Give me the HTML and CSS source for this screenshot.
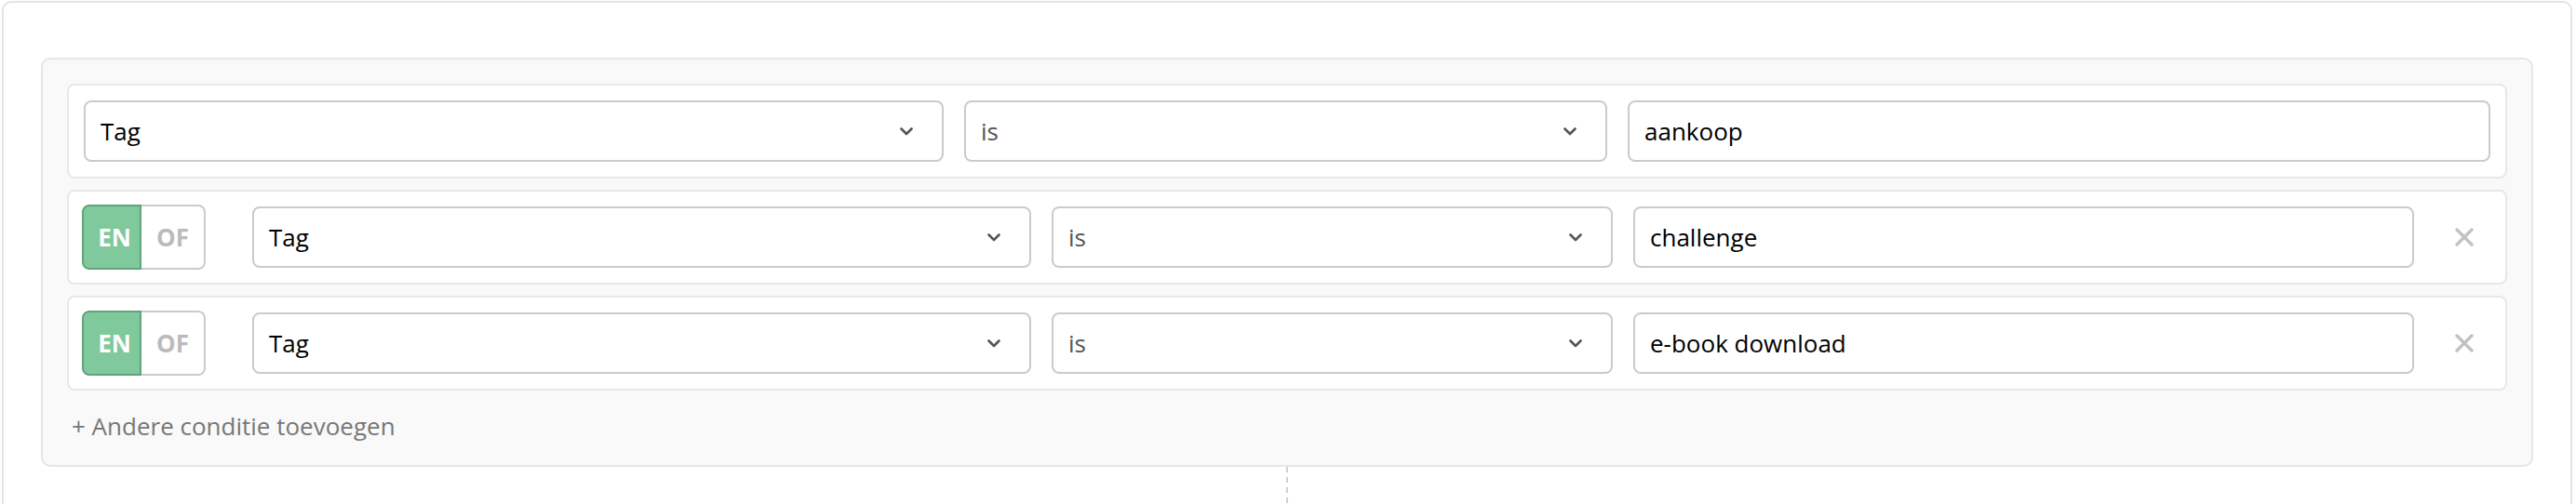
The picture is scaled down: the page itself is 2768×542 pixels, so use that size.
FILE: index.html
```html
<!DOCTYPE html>
<html lang="nl">
<head>
<meta charset="utf-8">
<title>Condities</title>
<link rel="stylesheet" href="styles.css">
</head>
<body>
<div class="card">
  <div class="panel">
    <div class="row row--first">
      <div class="select"><span class="val">Tag</span><svg class="chev" viewBox="0 0 14 9" width="14" height="9"><path d="M1.5 1.5 L7 7 L12.5 1.5" fill="none" stroke="#555" stroke-width="2.6" stroke-linecap="round" stroke-linejoin="round"/></svg></div>
      <div class="select"><span class="val val--muted">is</span><svg class="chev" viewBox="0 0 14 9" width="14" height="9"><path d="M1.5 1.5 L7 7 L12.5 1.5" fill="none" stroke="#555" stroke-width="2.6" stroke-linecap="round" stroke-linejoin="round"/></svg></div>
      <div class="input">aankoop</div>
    </div>
    <div class="row row--cond">
      <div class="toggle"><span class="toggle__opt toggle__opt--on">EN</span><span class="toggle__opt toggle__opt--off">OF</span></div>
      <div class="select"><span class="val">Tag</span><svg class="chev" viewBox="0 0 14 9" width="14" height="9"><path d="M1.5 1.5 L7 7 L12.5 1.5" fill="none" stroke="#555" stroke-width="2.6" stroke-linecap="round" stroke-linejoin="round"/></svg></div>
      <div class="select"><span class="val val--muted">is</span><svg class="chev" viewBox="0 0 14 9" width="14" height="9"><path d="M1.5 1.5 L7 7 L12.5 1.5" fill="none" stroke="#555" stroke-width="2.6" stroke-linecap="round" stroke-linejoin="round"/></svg></div>
      <div class="input">challenge</div>
      <div class="remove"><svg viewBox="0 0 20 20" width="20" height="20"><path d="M2 2 L18 18 M18 2 L2 18" stroke="#c2c2c2" stroke-width="3.4" stroke-linecap="round"/></svg></div>
    </div>
    <div class="row row--cond">
      <div class="toggle"><span class="toggle__opt toggle__opt--on">EN</span><span class="toggle__opt toggle__opt--off">OF</span></div>
      <div class="select"><span class="val">Tag</span><svg class="chev" viewBox="0 0 14 9" width="14" height="9"><path d="M1.5 1.5 L7 7 L12.5 1.5" fill="none" stroke="#555" stroke-width="2.6" stroke-linecap="round" stroke-linejoin="round"/></svg></div>
      <div class="select"><span class="val val--muted">is</span><svg class="chev" viewBox="0 0 14 9" width="14" height="9"><path d="M1.5 1.5 L7 7 L12.5 1.5" fill="none" stroke="#555" stroke-width="2.6" stroke-linecap="round" stroke-linejoin="round"/></svg></div>
      <div class="input">e-book download</div>
      <div class="remove"><svg viewBox="0 0 20 20" width="20" height="20"><path d="M2 2 L18 18 M18 2 L2 18" stroke="#c2c2c2" stroke-width="3.4" stroke-linecap="round"/></svg></div>
    </div>
    <div class="add">+ Andere conditie toevoegen</div>
  </div>
  <div class="connector"></div>
</div>
</body>
</html>
```
FILE: styles.css
```css
* { box-sizing: border-box; }

body {
  margin: 0;
  background: #fff;
  font-family: "Open Sans", "Noto Sans", sans-serif;
  font-size: 26px;
  color: #111;
}

.card {
  margin: 1px 4px 0 2px;
  border: 2px solid #e4e4e4;
  border-radius: 10px;
  padding: 59px 40px 40px;
}

.panel {
  background: #f9f9f9;
  border: 2px solid #e6e6e6;
  border-radius: 10px;
  padding: 26px 26px 24px;
  display: flex;
  flex-direction: column;
  gap: 12px;
}

.row {
  background: #fff;
  border: 2px solid #e8e8e8;
  border-radius: 8px;
  padding: 16px;
  display: grid;
  align-items: center;
  column-gap: 22px;
}

.row--first {
  grid-template-columns: minmax(0, 924fr) minmax(0, 691fr) minmax(0, 927fr);
}

.row--cond {
  padding: 14px 16px 14px 14px;
  grid-template-columns: 161px minmax(0, 837fr) minmax(0, 603fr) minmax(0, 839fr) 60px;
}

.select,
.input {
  height: 66px;
  border: 2px solid #cbcbcb;
  border-radius: 8px;
  background: #fff;
  display: flex;
  align-items: center;
  padding: 0 16px;
  min-width: 0;
  white-space: nowrap;
  color: #000;
}

.select {
  justify-content: space-between;
  padding-right: 31px;
}

.val--muted { color: #555; }

.chev { display: block; flex: none; }

.toggle {
  display: flex;
  height: 70px;
  width: 133px;
  font-weight: 700;
}

.toggle__opt {
  display: flex;
  align-items: center;
  justify-content: center;
}

.toggle__opt--on {
  width: 64px;
  background: #80c99d;
  border: 2px solid #5fa47a;
  border-radius: 8px 0 0 8px;
  color: #fff;
  padding-left: 6px;
}

.toggle__opt--off {
  flex: 1;
  border: 2px solid #cbcbcb;
  border-left: none;
  border-radius: 0 8px 8px 0;
  color: #bbb;
}

.remove {
  display: flex;
  justify-content: center;
  padding-left: 3px;
}

.remove svg { display: block; }

.add {
  margin-top: 8px;
  line-height: 36px;
  color: #777;
  padding-left: 5px;
}

.connector {
  width: 2px;
  height: 80px;
  margin: 0 auto;
  background: repeating-linear-gradient(to bottom, #cfcfcf 0 6px, transparent 6px 11px);
}
```
